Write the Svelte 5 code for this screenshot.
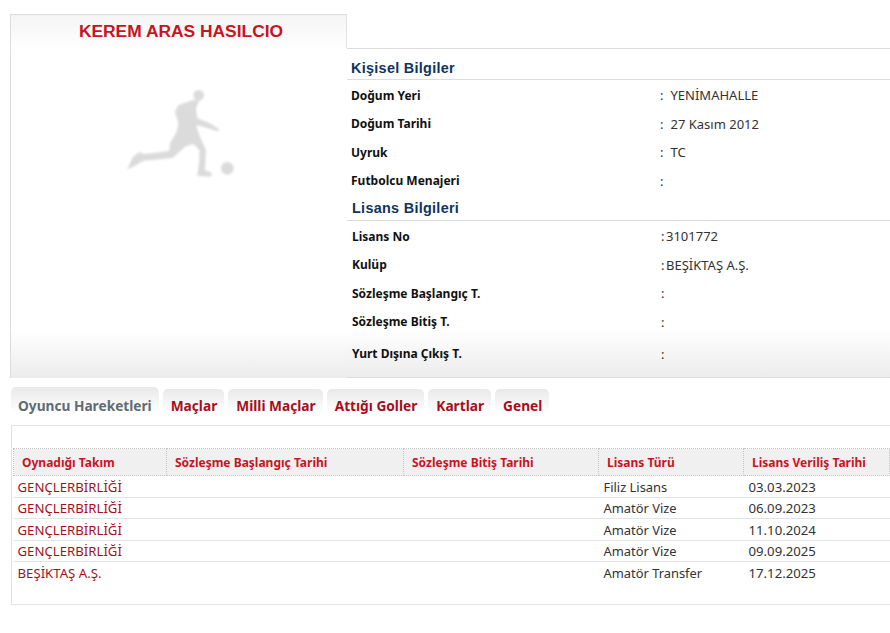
<script>
	const personal = [
		{ label: 'Doğum Yeri', value: 'YENİMAHALLE' },
		{ label: 'Doğum Tarihi', value: '27 Kasım 2012' },
		{ label: 'Uyruk', value: 'TC' },
		{ label: 'Futbolcu Menajeri', value: '' }
	];

	const license = [
		{ label: 'Lisans No', value: '3101772' },
		{ label: 'Kulüp', value: 'BEŞİKTAŞ A.Ş.' },
		{ label: 'Sözleşme Başlangıç T.', value: '' },
		{ label: 'Sözleşme Bitiş T.', value: '' },
		{ label: 'Yurt Dışına Çıkış T.', value: '' }
	];

	const tabs = ['Oyuncu Hareketleri', 'Maçlar', 'Milli Maçlar', 'Attığı Goller', 'Kartlar', 'Genel'];

	const columns = ['Oynadığı Takım', 'Sözleşme Başlangıç Tarihi', 'Sözleşme Bitiş Tarihi', 'Lisans Türü', 'Lisans Veriliş Tarihi'];

	const moves = [
		{ team: 'GENÇLERBİRLİĞİ', type: 'Filiz Lisans', date: '03.03.2023' },
		{ team: 'GENÇLERBİRLİĞİ', type: 'Amatör Vize', date: '06.09.2023' },
		{ team: 'GENÇLERBİRLİĞİ', type: 'Amatör Vize', date: '11.10.2024' },
		{ team: 'GENÇLERBİRLİĞİ', type: 'Amatör Vize', date: '09.09.2025' },
		{ team: 'BEŞİKTAŞ A.Ş.', type: 'Amatör Transfer', date: '17.12.2025' }
	];
</script>

<main>
	<section class="profile">
		<div class="photo-col">
			<h1>KEREM ARAS HASILCIO</h1>
			<svg class="player" viewBox="0 0 390 330" width="130" height="110" aria-hidden="true">
				<defs>
					<filter id="soft"><feGaussianBlur stdDeviation="3.5" /></filter>
				</defs>
				<g fill="#dbdbdb" filter="url(#soft)">
					<circle cx="266" cy="46" r="16" />
					<circle cx="352" cy="265" r="19" />
					<path d="M250 60 L205 75 L195 95 L205 130 L200 155 L180 190 L178 212 L140 218 L100 222 L88 216 L68 232 L52 268 L70 260 L100 242 L150 238 L188 234 L225 200 L250 192 L268 210 L268 240 L262 288 L302 290 L306 280 L285 270 L288 210 L270 170 L258 135 L280 140 L322 154 L328 148 L300 130 L262 115 L258 85 L268 62 Z" />
				</g>
			</svg>
		</div>

		<div class="info-col">
			<h2>Kişisel Bilgiler</h2>
			<div class="rows">
				{#each personal as row}
					<div class="row">
						<span class="label">{row.label}</span>
						<span class="value"><i>:</i>{row.value}</span>
					</div>
				{/each}
			</div>

			<h2 class="second">Lisans Bilgileri</h2>
			<div class="rows second-rows">
				{#each license as row}
					<div class="row">
						<span class="label">{row.label}</span>
						<span class="value"><i>:</i>{row.value}</span>
					</div>
				{/each}
			</div>
		</div>
	</section>

	<nav class="tabs">
		{#each tabs as tab, i}
			<span class="tab" class:active={i === 0}>{tab}</span>
		{/each}
	</nav>

	<section class="moves">
		<table>
			<thead>
				<tr>
					{#each columns as col}
						<th>{col}</th>
					{/each}
				</tr>
			</thead>
			<tbody>
				{#each moves as move}
					<tr>
						<td class="team">{move.team}</td>
						<td></td>
						<td></td>
						<td class="type">{move.type}</td>
						<td class="date">{move.date}</td>
					</tr>
				{/each}
			</tbody>
		</table>
	</section>
</main>

<style>
	:global(body) {
		background: #fff;
		font-family: "Noto Sans", "DejaVu Sans", sans-serif;
		overflow: hidden;
	}

	main {
		width: 890px;
		height: 633px;
		padding: 14px 0 0 10px;
		box-sizing: border-box;
	}

	.profile {
		display: grid;
		grid-template-columns: 337px 1fr;
		height: 364px;
		box-sizing: border-box;
		border-bottom: 1px solid #dcdcdc;
		background: linear-gradient(to bottom, #fff 0, #fff 315px, #ececec 100%);
	}

	.photo-col {
		margin-bottom: -1px;
		border-top: 1px solid #dcdcdc;
		border-left: 1px solid #dcdcdc;
		box-sizing: border-box;
		background: linear-gradient(to bottom, #f4f4f4 0, #fff 34px, #fff 315px, #ececec 100%);
	}

	h1 {
		height: 33px;
		margin: 0;
		padding: 7px 0 0 5px;
		box-sizing: border-box;
		border-right: 1px solid #e2e2e2;
		font: bold 17.4px/19px "Liberation Sans", Arial, sans-serif;
		color: #c8141e;
		text-align: center;
	}

	.player {
		display: block;
		margin: 32px 0 0 99px;
	}

	.info-col {
		margin-top: 34px;
		border-top: 1px solid #dcdcdc;
		box-sizing: border-box;
		min-width: 0;
	}

	h2 {
		margin: 11px 0 0;
		padding: 0 0 2px 4px;
		font: bold 14.4px/17px "Liberation Sans", Arial, sans-serif;
		letter-spacing: 0.3px;
		color: #0f3460;
		border-bottom: 1px solid #dcdcdc;
	}

	h2.second {
		margin-top: 5px;
		padding: 0 0 3px 5px;
	}

	.rows {
		display: flex;
		flex-direction: column;
		padding-top: 1px;
	}

	.row {
		display: grid;
		grid-template-columns: 309px 1fr;
		height: 28.5px;
		align-items: center;
		padding-left: 4px;
		font-size: 12px;
		color: #111;
	}

	.second-rows .row {
		padding-left: 5px;
	}

	.second-rows .row:last-child {
		height: 35px;
	}

	.label {
		font-weight: 700;
	}

	.value {
		color: #333;
		font-size: 13px;
		line-height: 16px;
	}

	.value i {
		font-style: normal;
		margin-right: 7px;
	}

	.second-rows .value i {
		margin-right: 1.5px;
	}

	.tabs {
		display: flex;
		align-items: flex-end;
		gap: 4px;
		margin: 9px 0 0 1px;
		height: 26px;
	}

	.tab {
		height: 24px;
		box-sizing: border-box;
		padding: 8px 7px 0 8px;
		border-radius: 5px 5px 0 0;
		background: linear-gradient(to bottom, #e9e9e9 0, #fff 100%);
		font-size: 13.7px;
		line-height: 18px;
		font-weight: 700;
		color: #a50f1c;
		white-space: nowrap;
	}

	.tab.active {
		height: 26px;
		padding: 10px 7px 0;
		color: #5f6b75;
	}

	.moves {
		margin: 12px 0 0 1px;
		height: 180px;
		padding: 22px 0 0 1px;
		box-sizing: border-box;
		border: 1px solid #e2e2e2;
		border-right: 0;
	}

	table {
		width: 877px;
		border-collapse: collapse;
		table-layout: fixed;
	}

	th {
		height: 26px;
		padding: 0 0 0 8px;
		background: #f0f0f0;
		border: 1px dotted #c4c4c4;
		font-size: 12px;
		font-weight: 700;
		color: #c8141e;
		text-align: left;
	}

	th:nth-child(1) { width: 144px; }
	th:nth-child(2) { width: 228px; }
	th:nth-child(3) { width: 186px; }
	th:nth-child(4) { width: 136px; }

	td {
		height: 19.5px;
		padding: 1px 0 0 5px;
		border-bottom: 1px solid #e2e2e2;
		font-size: 13.2px;
		line-height: 18px;
		color: #333;
	}

	td.team {
		padding-left: 4px;
		color: #a50f1c;
	}

	td.type {
		font-size: 12.9px;
	}

	tr:last-child td {
		border-bottom: 0;
	}
</style>
